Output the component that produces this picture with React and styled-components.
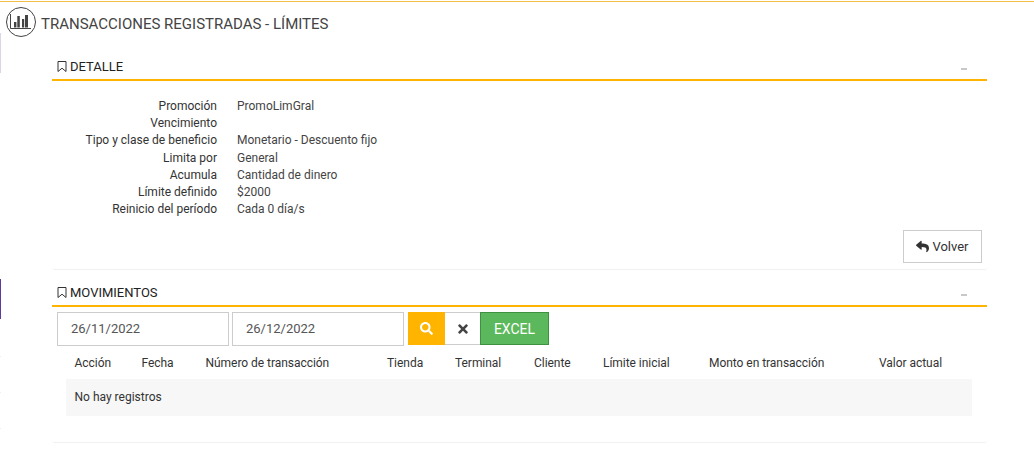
import styled, { createGlobalStyle } from 'styled-components'
import { FaReply, FaSearch, FaTimes } from 'react-icons/fa'

const GlobalStyle = createGlobalStyle`
  html, body {
    margin: 0;
    padding: 0;
    background: #fff;
  }
  body {
    font-family: Roboto, "Liberation Sans", sans-serif;
    font-size: 12px;
    color: #333;
  }
`

const Page = styled.div`
  position: relative;
  width: 1034px;
  height: 455px;
  margin-top: 1px;
  overflow: hidden;
  border-top: 1px solid #f4bd45;
  box-sizing: border-box;
`

const SideMark = styled.div`
  position: absolute;
  left: 0;
  top: ${p => p.$top}px;
  width: 1px;
  height: ${p => p.$height}px;
  background: ${p => p.$color};
`

const PageHeader = styled.header`
  display: flex;
  align-items: center;
  gap: 5px;
  height: 36px;
  padding: 4px 0 0 6px;
  box-sizing: border-box;
`

const IconRing = styled.div`
  width: 30px;
  height: 30px;
  box-sizing: border-box;
  border: 1px solid #444;
  border-radius: 50%;
  display: flex;
  align-items: center;
  justify-content: center;
`

const PageTitle = styled.h1`
  margin: 0;
  padding-top: 4px;
  font-size: 15px;
  font-weight: 400;
  color: #444;
`

const Content = styled.main`
  width: 935px;
  margin: 16px 0 0 52px;
`

const Panel = styled.section`
  padding-bottom: ${p => p.$bottom}px;
  margin-bottom: 10px;
  border-bottom: 1px solid #f0f0f0;
  border-radius: 3px;
`

const SectionHead = styled.div`
  display: flex;
  align-items: center;
  justify-content: space-between;
  height: 25px;
  padding: 0 20px 0 5px;
  border-bottom: 2px solid #ffb400;
`

const SectionTitle = styled.h2`
  display: flex;
  align-items: center;
  gap: 3px;
  margin: 0;
  font-size: 13px;
  font-weight: 400;
  color: #222;
`

const Collapse = styled.span`
  width: 6px;
  height: 2px;
  margin-top: 5px;
  background: #c8c8c8;
`

const Details = styled.dl`
  display: grid;
  grid-template-columns: 165px 1fr;
  column-gap: 20px;
  grid-auto-rows: 17.2px;
  margin: 0;
  padding-top: 17px;
  line-height: 17px;
`

const Term = styled.dt`
  text-align: right;
  color: #333;
`

const Value = styled.dd`
  margin: 0;
  color: #444;
`

const ActionRow = styled.div`
  display: flex;
  justify-content: flex-end;
  padding: 12px 5px 0 0;
`

const BackButton = styled.button`
  display: flex;
  align-items: center;
  gap: 3px;
  width: 79px;
  height: 33px;
  padding: 0;
  justify-content: center;
  background: #fff;
  border: 1px solid #ccc;
  font: inherit;
  font-size: 13px;
  color: #333;
`

const FilterRow = styled.div`
  display: flex;
  gap: 3px;
  padding: 5px 0 0 5px;
`

const DateField = styled.div`
  width: 172px;
  height: 34px;
  box-sizing: border-box;
  border: 1px solid #ccc;
  padding-left: 13px;
  line-height: 32px;
  font-size: 13px;
  color: #555;
`

const ButtonGroup = styled.div`
  display: flex;
  height: 33px;
  margin-left: 1px;
`

const SearchButton = styled.button`
  width: 37px;
  height: 33px;
  padding: 0;
  display: flex;
  align-items: center;
  justify-content: center;
  background: #ffb400;
  border: 0;
  color: #fff;
  font-size: 13px;
`

const ClearButton = styled(SearchButton)`
  width: 35px;
  background: #fff;
  border: 1px solid #ccc;
  border-width: 1px 0;
  color: #444;
  font-size: 14px;
`

const ExcelButton = styled.button`
  width: 69px;
  height: 33px;
  padding: 0;
  background: #5cb85c;
  border: 1px solid #3f9142;
  color: #fff;
  font: inherit;
  font-size: 14px;
`

const Table = styled.div`
  margin: 0 15px 0 14px;
`

const HeaderRow = styled.div`
  display: flex;
  height: 33px;
  align-items: center;
  color: #333;
`

const HeaderCell = styled.div`
  width: ${p => p.$width}px;
  padding-left: 8.5px;
  box-sizing: border-box;
  flex: none;
  letter-spacing: -0.04px;
`

const EmptyRow = styled.div`
  height: 37px;
  line-height: 37px;
  padding-left: 8.5px;
  background: #f7f7f7;
  color: #333;
`

const ChartIcon = () => (
  <svg width="22" height="16" viewBox="0 0 22 16" fill="none">
    <path d="M.5 0v14.5H21" stroke="#444" />
    <rect x="4" y="8" width="2.4" height="5.5" fill="#444" />
    <rect x="7.3" y="2" width="2.5" height="11.5" fill="#444" />
    <rect x="12" y="5" width="2.2" height="8.5" fill="#444" />
    <rect x="15" y="1" width="3" height="12.5" fill="#444" />
  </svg>
)

const BookmarkIcon = () => (
  <svg width="10" height="11" viewBox="0 0 10 11" fill="none">
    <path d="M1 .5h8v10L5 7.2 1 10.5z" stroke="#333" />
  </svg>
)

const details = [
  ['Promoción', 'PromoLimGral'],
  ['Vencimiento', ''],
  ['Tipo y clase de beneficio', 'Monetario - Descuento fijo'],
  ['Limita por', 'General'],
  ['Acumula', 'Cantidad de dinero'],
  ['Límite definido', '$2000'],
  ['Reinicio del período', 'Cada 0 día/s'],
]

const columns = [
  ['Acción', 67],
  ['Fecha', 64],
  ['Número de transacción', 181.5],
  ['Tienda', 68],
  ['Terminal', 79],
  ['Cliente', 69],
  ['Límite inicial', 106],
  ['Monto en transacción', 170],
  ['Valor actual', 100],
]

const sideMarks = [
  [31, 40, '#ddd6ea'],
  [277, 40, '#5f3b9b'],
  [354, 1, '#eeeeee'],
  [390, 1, '#eeeeee'],
  [426, 1, '#eeeeee'],
]

const App = () => (
  <Page>
    <GlobalStyle />
    {sideMarks.map(([top, height, color]) => (
      <SideMark key={top} $top={top} $height={height} $color={color} />
    ))}
    <PageHeader>
      <IconRing><ChartIcon /></IconRing>
      <PageTitle>TRANSACCIONES REGISTRADAS - LÍMITES</PageTitle>
    </PageHeader>
    <Content>
      <Panel $bottom={6}>
        <SectionHead>
          <SectionTitle><BookmarkIcon />DETALLE</SectionTitle>
          <Collapse />
        </SectionHead>
        <Details>
          {details.map(([term, value]) => [
            <Term key={term}>{term}</Term>,
            <Value key={term + '-v'}>{value}</Value>,
          ])}
        </Details>
        <ActionRow>
          <BackButton><FaReply size={13} />Volver</BackButton>
        </ActionRow>
      </Panel>
      <Panel $bottom={26}>
        <SectionHead>
          <SectionTitle><BookmarkIcon />MOVIMIENTOS</SectionTitle>
          <Collapse />
        </SectionHead>
        <FilterRow>
          <DateField>26/11/2022</DateField>
          <DateField>26/12/2022</DateField>
          <ButtonGroup>
            <SearchButton><FaSearch /></SearchButton>
            <ClearButton><FaTimes /></ClearButton>
            <ExcelButton>EXCEL</ExcelButton>
          </ButtonGroup>
        </FilterRow>
        <Table>
          <HeaderRow>
            {columns.map(([label, width]) => (
              <HeaderCell key={label} $width={width}>{label}</HeaderCell>
            ))}
          </HeaderRow>
          <EmptyRow>No hay registros</EmptyRow>
        </Table>
      </Panel>
    </Content>
  </Page>
)

export default App
